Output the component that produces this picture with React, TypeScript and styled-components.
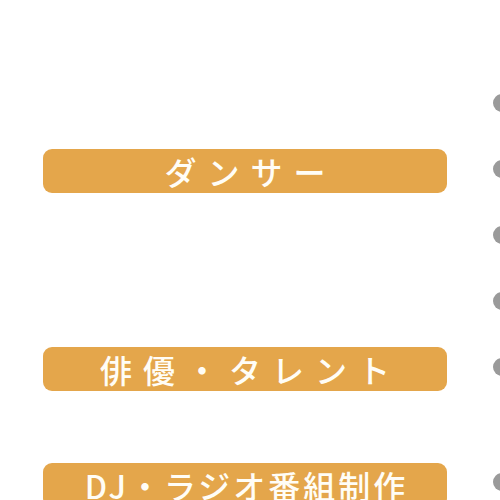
import React from 'react';
import styled, { createGlobalStyle } from 'styled-components';

const GlobalStyle = createGlobalStyle`
  html, body {
    margin: 0;
    padding: 0;
    background: #ffffff;
    overflow: hidden;
  }
`;

const Page = styled.div`
  position: relative;
  width: 500px;
  height: 500px;
  overflow: hidden;
  background: #ffffff;
  font-family: "Noto Sans CJK JP", "Noto Sans", sans-serif;
`;

const Column = styled.div`
  display: flex;
  flex-direction: column;
  width: 404px;
  padding-left: 43px;
`;

const Label = styled.div<{ $top: number; $spacing: number }>`
  margin-top: ${(p) => p.$top}px;
  height: 44px;
  border-radius: 9px;
  background: #e4a64b;
  color: #fffdf6;
  font-size: 32px;
  font-weight: 500;
  line-height: 44px;
  text-align: center;
  letter-spacing: ${(p) => p.$spacing}px;
  text-indent: ${(p) => p.$spacing}px;
  white-space: nowrap;
`;

// page indicator dots, sitting over the right edge
const DotRail = styled.div`
  position: absolute;
  top: 94px;
  right: -11px;
  display: flex;
  flex-direction: column;
`;

const Dot = styled.span<{ $top: number }>`
  display: block;
  width: 18px;
  height: 18px;
  margin-top: ${(p) => p.$top}px;
  border-radius: 50%;
  background: #9a9a9a;
`;

const labels = [
  { text: 'ダンサー', top: 149, spacing: 11 },
  { text: '俳優・タレント', top: 154, spacing: 11 },
  { text: 'DJ・ラジオ番組制作', top: 72, spacing: 3 },
];

const dots = [0, 48, 48, 48, 48, 97];

const App: React.FC = () => (
  <Page>
    <GlobalStyle />
    <Column>
      {labels.map((l) => (
        <Label key={l.text} $top={l.top} $spacing={l.spacing}>
          {l.text}
        </Label>
      ))}
    </Column>
    <DotRail>
      {dots.map((t, i) => (
        <Dot key={i} $top={t} />
      ))}
    </DotRail>
  </Page>
);

export default App;
